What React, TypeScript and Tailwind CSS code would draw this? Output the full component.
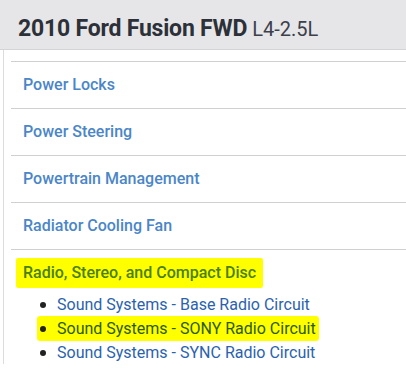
import React from "react";

const systems = ["Power Locks", "Power Steering", "Powertrain Management", "Radiator Cooling Fan"];

const circuits = [
  { name: "Sound Systems - Base Radio Circuit", marked: false },
  { name: "Sound Systems - SONY Radio Circuit", marked: true },
  { name: "Sound Systems - SYNC Radio Circuit", marked: false },
];

export default function App() {
  return (
    <div className="w-[406px] h-[370px] overflow-hidden bg-white" style={{ fontFamily: "Roboto, 'Liberation Sans', sans-serif" }}>
      <div className="h-[50px] bg-[#e6e6e8] border-b border-[#d4d4d4] flex items-baseline pl-[18px] pt-[14px]">
        <h1 className="text-[23px] leading-[28px] font-bold text-[#2c3038] tracking-[-0.2px]">2010 Ford Fusion FWD</h1>
        <span className="ml-[5px] text-[20px] text-[#3b404b]">L4-2.5L</span>
      </div>
      <div className="ml-[3px] border-l border-[#dcdcdc] pl-[7px] pt-[11px]">
        <div className="border-t border-[#d0d0d0]">
          {systems.map(s => (
            <div key={s} className="h-[47px] border-b border-[#d0d0d0] flex items-center pl-[12px]">
              <a className="text-[16px] font-medium text-[#4a86c8]">{s}</a>
            </div>
          ))}
          <div className="pt-[8px] pl-[5px]">
            <span className="inline-block bg-[#ffff00] px-[7px] py-[3px] rounded-[2px] text-[16px] font-medium text-[#4a7f0a]">
              Radio, Stereo, and Compact Disc
            </span>
          </div>
          <ul className="mt-[5px] pl-[26px] text-[16px] leading-[23px]">
            {circuits.map(c => (
              <li key={c.name} className="flex items-center">
                <span className={`flex items-center ${c.marked ? "bg-[#ffff00] rounded-[3px] pr-[3px] py-[1px]" : ""}`}>
                  <span className="w-[6px] h-[6px] rounded-full bg-[#222] ml-[3px] mr-[11px]" />
                  <a className={c.marked ? "text-[#2b5a07]" : "text-[#2b62ae]"}>{c.name}</a>
                </span>
              </li>
            ))}
          </ul>
        </div>
      </div>
    </div>
  );
}
